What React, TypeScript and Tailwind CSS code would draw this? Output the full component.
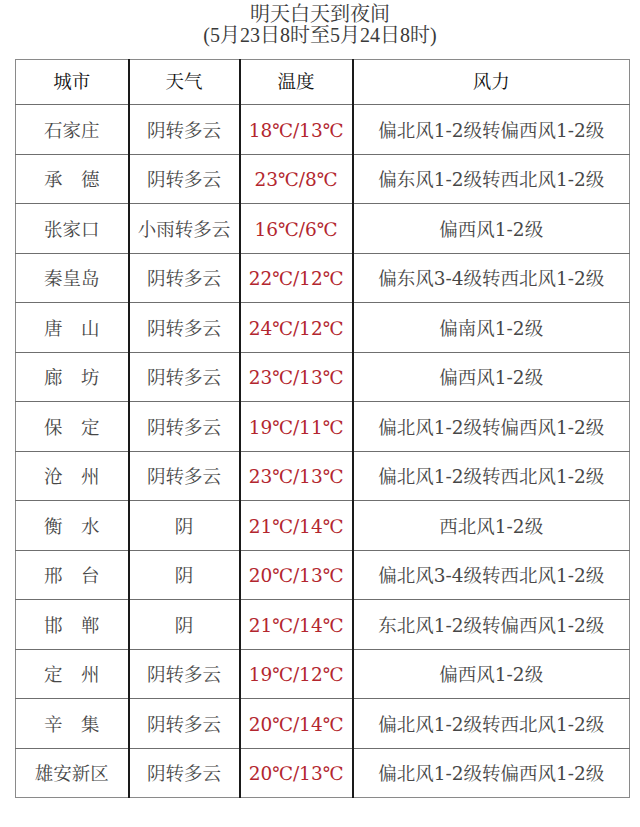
const rows: [string, string, string, string][] = [
  ["石家庄", "阴转多云", "18℃/13℃", "偏北风1-2级转偏西风1-2级"],
  ["承\u3000德", "阴转多云", "23℃/8℃", "偏东风1-2级转西北风1-2级"],
  ["张家口", "小雨转多云", "16℃/6℃", "偏西风1-2级"],
  ["秦皇岛", "阴转多云", "22℃/12℃", "偏东风3-4级转西北风1-2级"],
  ["唐\u3000山", "阴转多云", "24℃/12℃", "偏南风1-2级"],
  ["廊\u3000坊", "阴转多云", "23℃/13℃", "偏西风1-2级"],
  ["保\u3000定", "阴转多云", "19℃/11℃", "偏北风1-2级转偏西风1-2级"],
  ["沧\u3000州", "阴转多云", "23℃/13℃", "偏北风1-2级转西北风1-2级"],
  ["衡\u3000水", "阴", "21℃/14℃", "西北风1-2级"],
  ["邢\u3000台", "阴", "20℃/13℃", "偏北风3-4级转西北风1-2级"],
  ["邯\u3000郸", "阴", "21℃/14℃", "东北风1-2级转偏西风1-2级"],
  ["定\u3000州", "阴转多云", "19℃/12℃", "偏西风1-2级"],
  ["辛\u3000集", "阴转多云", "20℃/14℃", "偏北风1-2级转西北风1-2级"],
  ["雄安新区", "阴转多云", "20℃/13℃", "偏北风1-2级转偏西风1-2级"],
];

const titleFont =
  "font-['Liberation_Serif','Noto_Serif_CJK_SC','Noto_Sans_CJK_SC',serif]";
const cellFont =
  "font-['DejaVu_Serif','Noto_Serif_CJK_SC','Noto_Sans_CJK_SC',serif]";

export default function App() {
  return (
    <div className="w-[640px] h-[827px] bg-white">
      <div
        className={`pt-[4px] text-center text-[20px] leading-[21px] text-[#3a3a3a] ${titleFont}`}
      >
        <p>明天白天到夜间</p>
        <p>(5月23日8时至5月24日8时)</p>
      </div>

      <table
        className={`ml-[15px] mt-[13px] w-[614px] table-fixed border-collapse border border-[#8a8a8a] text-[18.5px] ${cellFont}`}
      >
        <colgroup>
          <col className="w-[113px]" />
          <col className="w-[111px]" />
          <col className="w-[113px]" />
          <col className="w-[277px]" />
        </colgroup>
        <thead>
          <tr className="h-[45px] border-b border-[#6f6f6f] text-[#111]">
            <th className="font-normal">城市</th>
            <th className="font-normal border-l-2 border-[#1a1a1a]">天气</th>
            <th className="font-normal border-l-2 border-[#1a1a1a]">温度</th>
            <th className="font-normal border-l-2 border-[#1a1a1a]">风力</th>
          </tr>
        </thead>
        <tbody>
          {rows.map(([city, weather, temp, wind], i) => (
            <tr
              key={city}
              className={`h-[49.5px] text-[#474747] ${
                i < rows.length - 1 ? "border-b border-[#6f6f6f]" : ""
              }`}
            >
              <td className="text-center pt-[3px]">{city}</td>
              <td className="text-center pt-[3px] border-l-2 border-[#1a1a1a]">
                {weather}
              </td>
              <td className="text-center pt-[3px] border-l-2 border-[#1a1a1a] text-[#b3262e] whitespace-nowrap">
                {temp}
              </td>
              <td className="text-center pt-[3px] border-l-2 border-[#1a1a1a] whitespace-nowrap">
                {wind}
              </td>
            </tr>
          ))}
        </tbody>
      </table>
    </div>
  );
}
